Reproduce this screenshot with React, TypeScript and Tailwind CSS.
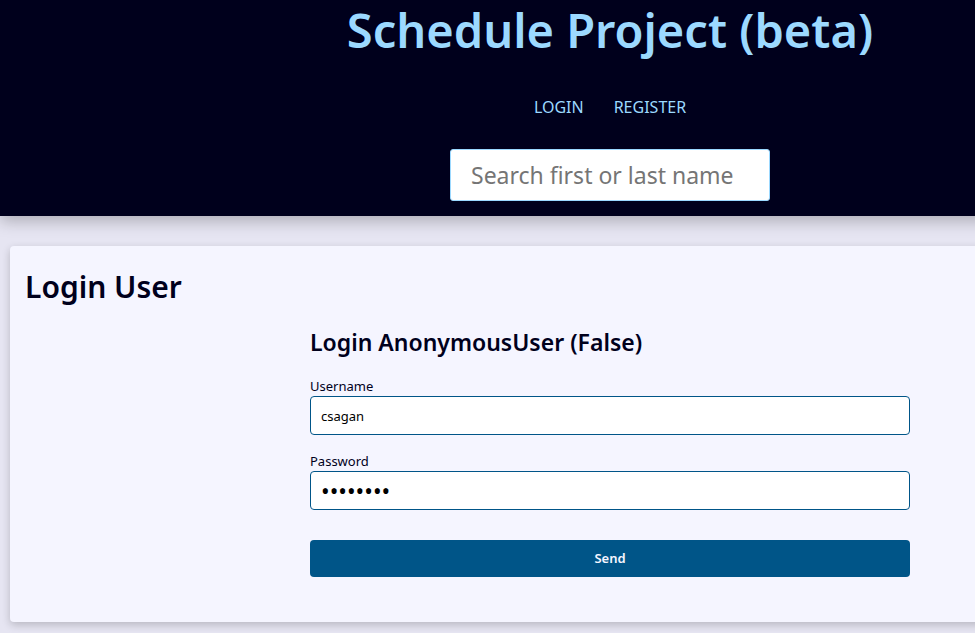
import { useState } from "react";

const fieldClass =
  "block h-[39px] w-full rounded border border-[#005588] bg-white px-2.5 text-black outline-none";

export default function App() {
  const [username, setUsername] = useState("csagan");
  const [password, setPassword] = useState("password");

  return (
    <div className="min-h-screen overflow-x-hidden bg-[#e6e5f2] font-['Noto_Sans',sans-serif] text-[#00001c]">
      <div className="min-w-[1220px]">
        <header className="flex flex-col items-center bg-[#00001c] pb-[15px] text-[#9cd9ff] shadow-[0_5px_15px_rgba(0,0,0,0.25)]">
          <h1 className="text-[47px] leading-[60px] font-semibold">Schedule Project (beta)</h1>
          <nav className="mt-[35px] flex gap-[30px] text-base leading-6">
            <a href="#login">LOGIN</a>
            <a href="#register">REGISTER</a>
          </nav>
          <input
            type="search"
            aria-label="Search first or last name"
            placeholder="Search first or last name"
            className="mt-[30px] h-[52px] w-80 rounded-[3px] border border-[#9cd9ff] bg-white pr-2 pl-5 text-[23px] text-black outline-none placeholder:text-[#757575]"
          />
        </header>
        <main className="mx-2.5 mt-[30px] mb-2.5 rounded bg-[#f5f5ff] px-[15px] pt-5 pb-[45px] shadow-[0_3px_8px_rgba(0,0,0,0.2)]">
          <h2 className="text-[30px] leading-[42px] font-semibold">Login User</h2>
          <form className="mx-auto w-[600px] pt-4" onSubmit={(e) => e.preventDefault()}>
            <h3 className="text-[23px] leading-9 font-semibold">Login AnonymousUser (False)</h3>
            <label htmlFor="username" className="mt-4 block text-[13px] leading-5">
              Username
            </label>
            <input
              id="username"
              type="text"
              value={username}
              onChange={(e) => setUsername(e.target.value)}
              className={`${fieldClass} text-[13px]`}
            />
            <label htmlFor="password" className="mt-4 block text-[13px] leading-5">
              Password
            </label>
            <input
              id="password"
              type="password"
              value={password}
              onChange={(e) => setPassword(e.target.value)}
              className={`${fieldClass} text-[23px]`}
            />
            <button
              type="submit"
              className="mt-[30px] block h-[37px] w-full rounded bg-[#005588] text-[13px] font-semibold text-[#f5f5ff]"
            >
              Send
            </button>
          </form>
        </main>
      </div>
    </div>
  );
}
